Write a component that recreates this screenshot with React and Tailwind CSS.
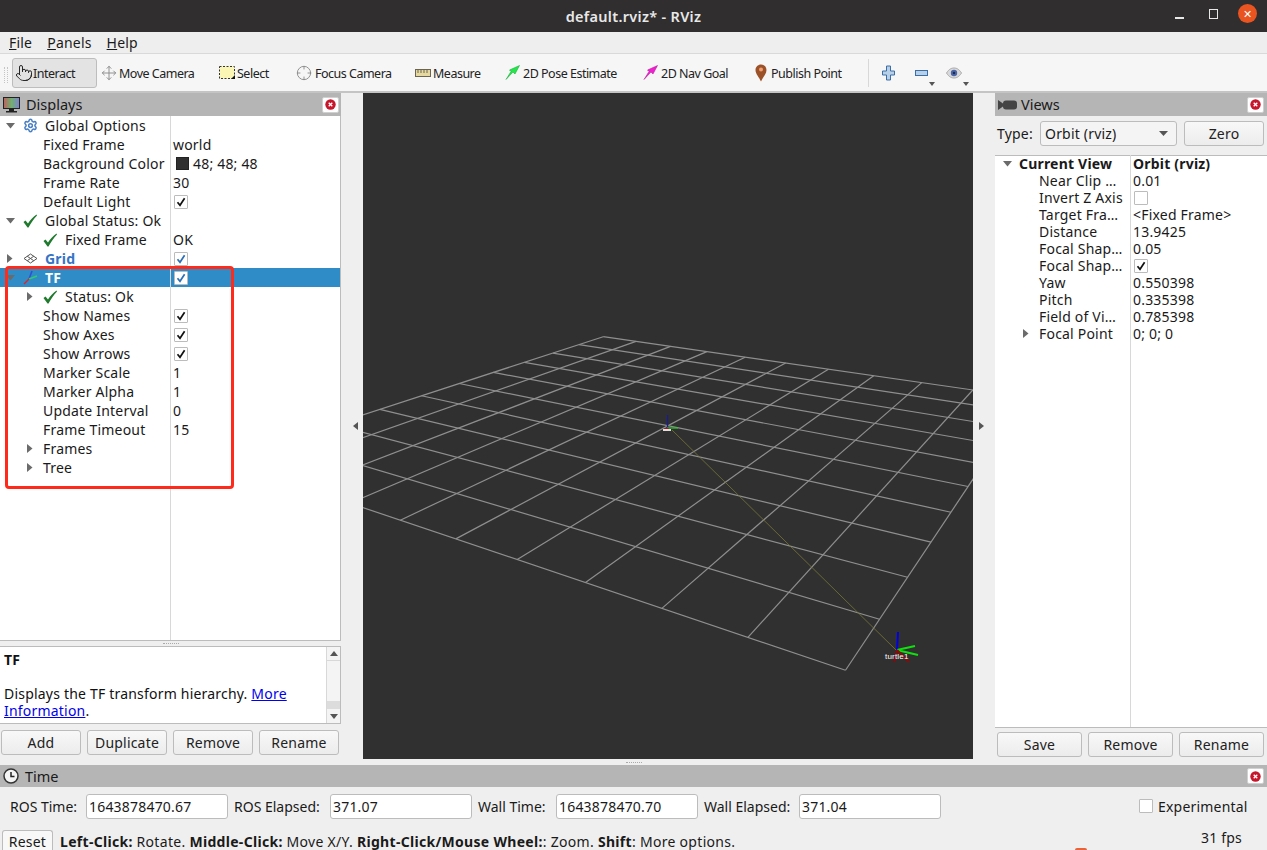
import React from "react";
import { Settings, Move, Crosshair, Pointer } from "lucide-react";

// ground plane homography, grid coords -> screen px
const project = (u, v) => {
  const w = 1 - 0.02451 * u - 0.03905 * v;
  return [(17.23 * u - 46.74 * v + 603.2) / w, (-3.637 * u - 5.61 * v + 336.7) / w];
};
const steps = [0, 1, 2, 3, 4, 5, 6, 7, 8, 9, 10];

function Arrow({ dir }) {
  if (dir === "down") {
    return <svg width="9" height="6" viewBox="0 0 9 6"><path d="M0 0h9L4.500 5.500z" fill="#6b6b6b" /></svg>;
  }
  return <svg width="6" height="9" viewBox="0 0 6 9"><path d="M0 0v9l5.500-4.500z" fill="#6b6b6b" /></svg>;
}

function CloseBtn() {
  return (
    <div className="w-[17px] h-[16px] bg-white rounded-[2px] border border-[#d0d0d0] flex items-center justify-center">
      <svg width="11" height="11" viewBox="0 0 11 11">
        <circle cx="5.500" cy="5.500" r="5.200" fill="#c7162b" />
        <path d="M3.700 3.700l3.600 3.600M7.300 3.700l-3.600 3.600" stroke="#fff" strokeWidth="1.300" />
      </svg>
    </div>
  );
}

function CheckBox({ on, blue }) {
  return (
    <div className="w-[14px] h-[14px] bg-white border border-[#bcbcbc] rounded-[1px] flex items-center justify-center">
      {on && (
        <svg width="10" height="10" viewBox="0 0 10 10">
          <path d="M1.500 5.200L4 8.300 8.600 1.300" fill="none" stroke={blue ? "#2c6fb5" : "#111"} strokeWidth="1.700" />
        </svg>
      )}
    </div>
  );
}

function GreenCheck() {
  return (
    <svg width="14" height="14" viewBox="0 0 14 14">
      <path d="M0.500 8L2.500 6.500 5 9.500C7 6 10 3 13.500 0.500L14 1.500C10.500 5 8 9 5.500 13.500H4.500z" fill="#1f7a2e" />
    </svg>
  );
}

function GridIcon() {
  return (
    <svg width="15" height="11" viewBox="0 0 15 11" fill="none" stroke="#555" strokeWidth="1">
      <path d="M7.500 1L14 5.500 7.500 10 1 5.500zM4.200 3.200l6.500 4.500M10.800 3.200L4.300 7.700" />
    </svg>
  );
}

function AxesIcon() {
  return (
    <svg width="15" height="15" viewBox="0 0 15 15" fill="none" strokeWidth="1.500">
      <path d="M6 9L9 1" stroke="#2f4fd8" />
      <path d="M6 9L14 6" stroke="#2ecb6f" />
      <path d="M6 9L1 14" stroke="#d8262c" />
    </svg>
  );
}

const displayRows = [
  { level: 0, arrow: "down", icon: <Settings size={15} strokeWidth={2.4} color="#4a7fc4" />, label: "Global Options" },
  { level: 1, label: "Fixed Frame", value: "world" },
  { level: 1, label: "Background Color", color: true, value: "48; 48; 48" },
  { level: 1, label: "Frame Rate", value: "30" },
  { level: 1, label: "Default Light", check: true },
  { level: 0, arrow: "down", icon: <GreenCheck />, label: "Global Status: Ok" },
  { level: 1, icon: <GreenCheck />, label: "Fixed Frame", value: "OK" },
  { level: 0, arrow: "right", icon: <GridIcon />, label: "Grid", check: true, blue: true },
  { level: 0, arrow: "down", icon: <AxesIcon />, label: "TF", check: true, selected: true },
  { level: 1, arrow: "right", icon: <GreenCheck />, label: "Status: Ok" },
  { level: 1, label: "Show Names", check: true },
  { level: 1, label: "Show Axes", check: true },
  { level: 1, label: "Show Arrows", check: true },
  { level: 1, label: "Marker Scale", value: "1" },
  { level: 1, label: "Marker Alpha", value: "1" },
  { level: 1, label: "Update Interval", value: "0" },
  { level: 1, label: "Frame Timeout", value: "15" },
  { level: 1, arrow: "right", label: "Frames" },
  { level: 1, arrow: "right", label: "Tree" },
];

function DisplayRow({ row }) {
  return (
    <div className={row.selected ? "flex h-[19px] bg-[#308cc6] text-white" : "flex h-[19px]"}>
      <div className={row.level === 1 ? "w-[170px] pl-[20px] flex items-center shrink-0" : "w-[170px] flex items-center shrink-0"}>
        <div className="w-[20px] flex justify-center">{row.arrow && <Arrow dir={row.arrow} />}</div>
        {row.icon ? (
          <div className="w-[25px] pl-[3px] flex items-center">{row.icon}</div>
        ) : (
          <div className="w-[3px]" />
        )}
        <span className={row.selected ? "font-bold" : row.blue ? "font-bold text-[#3574c4]" : ""}>{row.label}</span>
      </div>
      <div className="flex-1 flex items-center pl-[2px] border-l border-[#d8d8d8]">
        {row.check && <div className="ml-[1px]"><CheckBox on blue={row.blue || row.selected} /></div>}
        {row.color && <div className="w-[13px] h-[13px] bg-[#303030] border border-[#222] ml-[3px] mr-[4px]" />}
        {row.value && <span>{row.value}</span>}
      </div>
    </div>
  );
}

const viewRows = [
  ["Near Clip …", "0.01"],
  ["Invert Z Axis", null, "off"],
  ["Target Fra…", "<Fixed Frame>"],
  ["Distance", "13.9425"],
  ["Focal Shap…", "0.05"],
  ["Focal Shap…", null, "on"],
  ["Yaw", "0.550398"],
  ["Pitch", "0.335398"],
  ["Field of Vi…", "0.785398"],
];

function Btn({ children, className }) {
  return (
    <button className={"h-[25px] bg-gradient-to-b from-[#f8f8f8] to-[#ececec] border border-[#bcbcbc] rounded-[3px] text-[14px] text-[#222] flex items-center justify-center " + className}>
      {children}
    </button>
  );
}

function ToolItem({ icon, label, className }) {
  return (
    <div className={"flex items-center h-[30px] text-[12.500px] tracking-[-0.5px] text-[#222] " + className}>
      {icon}
      <span className="pt-[1px]">{label}</span>
    </div>
  );
}

function TimeInput({ value, className }) {
  return (
    <div className={"h-[25px] bg-white border border-[#bcbcbc] rounded-[3px] pl-[2px] flex items-center " + className}>{value}</div>
  );
}

function Viewport() {
  return (
    <div className="flex-1 bg-[#303030] overflow-hidden">
      <svg width="610" height="666" viewBox="363 93 610 666" className="block">
        {steps.map((i) => {
          const a = project(i, 0);
          const b = project(i, 10);
          const c = project(0, i);
          const d = project(10, i);
          return (
            <g key={i} stroke="#8f8f8f" strokeWidth="1.200" fill="none">
              <line x1={a[0]} y1={a[1]} x2={b[0]} y2={b[1]} />
              <line x1={c[0]} y1={c[1]} x2={d[0]} y2={d[1]} />
            </g>
          );
        })}
        <line x1="672" y1="430" x2="896" y2="650" stroke="#77773a" strokeWidth="0.800" />
        <g fill="none">
          <path d="M667.500 428V415" stroke="#1c1c86" strokeWidth="1.500" />
          <path d="M667 428h11" stroke="#22d022" strokeWidth="1.200" />
          <path d="M667 428l-4 2M667 428l3 2" stroke="#a01818" strokeWidth="1.200" />
          <rect x="663" y="429" width="8" height="2" fill="#e0e0e0" />
        </g>
        <g fill="none">
          <path d="M897 650L898 632" stroke="#0000e0" strokeWidth="2" />
          <path d="M897 650L915 646M897 650L918 655" stroke="#10e010" strokeWidth="2" />
          <path d="M897 650L894 662M897 650L909 662" stroke="#8b0a0a" strokeWidth="2" />
        </g>
        <text x="885" y="659" fontSize="8" fill="#fff" fontFamily="Liberation Sans, sans-serif">turtle1</text>
      </svg>
    </div>
  );
}

export default function App() {
  return (
    <div className="relative w-[1267px] h-[850px] overflow-hidden flex flex-col bg-[#efefef] text-[14px] leading-[17px] tracking-[0.2px] text-[#1a1a1a] [font-family:'Noto_Sans',sans-serif]">
      {/* window title */}
      <div className="h-[32px] bg-[#302e2e] flex items-center shrink-0 relative">
        <div className="w-full text-center text-[#e8e8e8] font-semibold text-[14.500px] tracking-[0.3px]">default.rviz* - RViz</div>
        <div className="absolute right-[10px] top-[4px] flex items-center">
          <div className="w-[9px] h-[2px] bg-[#e8e8e8] mr-[25px] mt-[8px]" />
          <div className="w-[9px] h-[10px] border-[1.500px] border-[#e8e8e8] mr-[20px]" />
          <div className="w-[19px] h-[19px] rounded-full bg-[#e95420] text-white text-[11px] flex items-center justify-center">✕</div>
        </div>
      </div>

      {/* menu */}
      <div className="h-[22px] bg-[#eeeeee] border-b border-[#d9d9d9] flex items-center pl-[9px] gap-[15px] shrink-0">
        <span><span className="underline">F</span>ile</span>
        <span><span className="underline">P</span>anels</span>
        <span><span className="underline">H</span>elp</span>
      </div>

      {/* toolbar */}
      <div className="h-[39px] bg-[#f6f6f6] border-b-2 border-[#c4c4c4] flex items-center pl-[12px] relative shrink-0">
        <div className="absolute left-[4px] top-[13px] w-[4px] h-[16px] border-x border-dotted border-[#c4c4c4]" />
        <ToolItem className="w-[85px] bg-[#e3e3e3] border border-[#bdbdbd] rounded-[3px] pl-[2px]" icon={<Pointer size={18} strokeWidth={1.300} color="#222" />} label="Interact" />
        <ToolItem className="w-[120px] pl-[4px] gap-[2px]" icon={<Move size={16} strokeWidth={1.400} color="#8a8a8a" />} label="Move Camera" />
        <ToolItem className="w-[77px] pl-[2px] gap-[2px]" icon={
          <svg width="16" height="13" viewBox="0 0 16 13">
            <rect x="0.500" y="0.500" width="15" height="12" fill="#fbf6b4" stroke="#333" strokeDasharray="2 1.500" />
            <path d="M16 13h-4l4-4z" fill="#111" />
          </svg>
        } label="Select" />
        <ToolItem className="w-[119px] pl-[2px] gap-[3px]" icon={<Crosshair size={16} strokeWidth={1.400} color="#8a8a8a" />} label="Focus Camera" />
        <ToolItem className="w-[90px] pl-[2px] gap-[2px]" icon={
          <svg width="16" height="8" viewBox="0 0 16 8">
            <rect x="0.500" y="0.500" width="15" height="7" fill="#e6d9a0" stroke="#6b6450" />
            <path d="M3 1v3M6 1v3M9 1v3M12 1v3" stroke="#6b6450" />
          </svg>
        } label="Measure" />
        <ToolItem className="w-[138px] pl-[2px] gap-[3px]" icon={
          <svg width="15" height="15" viewBox="0 0 15 15"><path d="M14.500 0.500L10 9 8 7 1 14.500l5-8-1.500-1.500z" fill="#22e84a" stroke="#12a030" strokeWidth="0.500" /></svg>
        } label="2D Pose Estimate" />
        <ToolItem className="w-[112px] pl-[2px] gap-[3px]" icon={
          <svg width="15" height="15" viewBox="0 0 15 15"><path d="M14.500 0.500L10 9 8 7 1 14.500l5-8-1.500-1.500z" fill="#f020d0" stroke="#b01090" strokeWidth="0.500" /></svg>
        } label="2D Nav Goal" />
        <ToolItem className="w-[115px] pl-[2px] gap-[4px]" icon={
          <svg width="12" height="18" viewBox="0 0 12 18">
            <path d="M6 0.500c3 0 5.500 2.400 5.500 5.500 0 4-3.500 7-5.500 11.500C4 13 0.500 10 0.500 6 0.500 2.900 3 0.500 6 0.500z" fill="#9c5228" />
            <circle cx="6" cy="5.500" r="2" fill="#f0a070" />
          </svg>
        } label="Publish Point" />
        <div className="w-px h-[28px] bg-[#d8d8d8] mr-[13px]" />
        <svg width="13" height="16" viewBox="0 0 13 16" className="mr-[20px]">
          <path d="M4.500 1h4v5h4v4h-4v5h-4v-5h-4V6h4z" fill="#b8cfe8" stroke="#3a6ea8" />
        </svg>
        <div className="relative mr-[18px]">
          <svg width="13" height="6" viewBox="0 0 13 6" className="block">
            <rect x="0.500" y="0.500" width="12" height="5" fill="#b8cfe8" stroke="#3a6ea8" />
          </svg>
          <svg width="6" height="4" viewBox="0 0 6 4" className="absolute left-[14px] top-[12px]"><path d="M0 0h6L3 4z" fill="#555" /></svg>
        </div>
        <div className="relative">
          <svg width="16" height="12" viewBox="0 0 16 12" className="block">
            <path d="M0.500 6C3 2 5.500 1 8 1s5 1 7.500 5C13 10 10.500 11 8 11S3 10 0.500 6z" fill="#d9d9d9" stroke="#aaa" />
            <circle cx="8" cy="6" r="3.200" fill="#4a66a8" />
            <circle cx="8" cy="6" r="1.200" fill="#1e2a4a" />
          </svg>
          <svg width="6" height="4" viewBox="0 0 6 4" className="absolute left-[17px] top-[15px]"><path d="M0 0h6L3 4z" fill="#555" /></svg>
        </div>
      </div>

      {/* docks + 3d view */}
      <div className="h-[666px] flex shrink-0">
        <div className="w-[341px] flex flex-col shrink-0">
          <div className="h-[23px] bg-[#b5b5b5] flex items-center justify-between pl-[3px] pr-[2px] shrink-0">
            <div className="flex items-center gap-[6px]">
              <svg width="17" height="16" viewBox="0 0 17 16">
                <defs>
                  <linearGradient id="scr" x1="0" x2="1" y1="0" y2="0">
                    <stop offset="0" stopColor="#c06060" />
                    <stop offset="0.500" stopColor="#70b070" />
                    <stop offset="1" stopColor="#8080d0" />
                  </linearGradient>
                </defs>
                <rect x="0.500" y="0.500" width="16" height="11" fill="url(#scr)" stroke="#222" />
                <path d="M6 12h5v2h3v1.500H3V14h3z" fill="#222" />
              </svg>
              <span className="text-[14.500px] tracking-normal">Displays</span>
            </div>
            <CloseBtn />
          </div>
          <div className="h-[525px] bg-white border-r border-b border-[#bcbcbc] flex flex-col shrink-0 relative">
            {displayRows.map((row, i) => (
              <DisplayRow key={i} row={row} />
            ))}
            <div className="flex-1 ml-[170px] border-l border-[#d8d8d8]" />
          </div>
          <div className="h-[5px] flex items-center justify-center shrink-0">
            <div className="w-[16px] border-t border-dotted border-[#aaa]" />
          </div>
          <div className="h-[78px] bg-white border-y border-r border-[#bcbcbc] flex shrink-0">
            <div className="flex-1 pl-[4px] pt-[4px] text-[14px] text-[#111]">
              <div className="font-bold">TF</div>
              <div className="h-[17px]" />
              <div>Displays the TF transform hierarchy. <a className="text-[#0000ee] underline">More Information</a>.</div>
            </div>
            <div className="w-[14px] flex flex-col border-l border-[#d8d8d8] bg-[#f4f4f4]">
              <div className="h-[14px] flex items-center justify-center border-b border-[#d8d8d8]"><svg width="8" height="5" viewBox="0 0 8 5"><path d="M0 5h8L4 0z" fill="#555" /></svg></div>
              <div className="flex-1" />
              <div className="h-[8px] bg-[#dcdcdc]" />
              <div className="h-[14px] flex items-center justify-center"><svg width="8" height="5" viewBox="0 0 8 5"><path d="M0 0h8L4 5z" fill="#555" /></svg></div>
            </div>
          </div>
          <div className="flex pl-[1px] gap-[6px] mt-[6px]">
            <Btn className="w-[80px]">Add</Btn>
            <Btn className="w-[80px]">Duplicate</Btn>
            <Btn className="w-[80px]">Remove</Btn>
            <Btn className="w-[80px]">Rename</Btn>
          </div>
        </div>

        <div className="w-[22px] flex items-center justify-center shrink-0">
          <svg width="5" height="8" viewBox="0 0 5 8" className="ml-[6px]"><path d="M5 0v8L0 4z" fill="#555" /></svg>
        </div>

        <Viewport />

        <div className="w-[22px] flex items-center justify-center shrink-0">
          <svg width="5" height="8" viewBox="0 0 5 8" className="-ml-[6px]"><path d="M0 0v8l5-4z" fill="#555" /></svg>
        </div>

        <div className="w-[272px] flex flex-col shrink-0">
          <div className="h-[23px] bg-[#b5b5b5] flex items-center justify-between pl-[3px] pr-[3px] shrink-0">
            <div className="flex items-center gap-[4px]">
              <svg width="19" height="10" viewBox="0 0 19 10">
                <path d="M0 0l5 3.500V6.500L0 10z" fill="#444" />
                <rect x="5" y="0.500" width="14" height="9" rx="3" fill="#444" />
              </svg>
              <span className="text-[14.500px] tracking-normal">Views</span>
            </div>
            <CloseBtn />
          </div>
          <div className="h-[39px] flex items-center pl-[2px] pb-[5px] shrink-0">
            <span className="w-[43px] text-[14px]">Type:</span>
            <div className="w-[137px] h-[25px] bg-[#f4f4f4] border border-[#bcbcbc] rounded-[3px] flex items-center justify-between pl-[4px] pr-[8px]">
              <span>Orbit (rviz)</span>
              <svg width="9" height="5" viewBox="0 0 9 5"><path d="M0 0h9L4.500 5z" fill="#555" /></svg>
            </div>
            <Btn className="w-[80px] ml-[7px]">Zero</Btn>
          </div>
          <div className="h-[573px] bg-white border-y border-[#bcbcbc] shrink-0 relative">
            <div className="flex h-[17px] -mt-[1px]">
              <div className="w-[135px] flex items-center shrink-0 font-bold">
                <div className="w-[24px] flex justify-center pl-[1px]"><Arrow dir="down" /></div>
                Current View
              </div>
              <div className="flex-1 pl-[2px] border-l border-[#d8d8d8] font-bold">Orbit (rviz)</div>
            </div>
            {viewRows.map((r, i) => (
              <div key={i} className="flex h-[17px]">
                <div className="w-[135px] pl-[44px] shrink-0 whitespace-nowrap">{r[0]}</div>
                <div className="flex-1 pl-[2px] border-l border-[#d8d8d8] flex items-center">
                  {r[1]}
                  {r[2] && <div className="ml-[1px]"><CheckBox on={r[2] === "on"} /></div>}
                </div>
              </div>
            ))}
            <div className="flex h-[17px]">
              <div className="w-[135px] flex items-center shrink-0">
                <div className="w-[44px] flex justify-end pr-[10px]"><Arrow dir="right" /></div>
                Focal Point
              </div>
              <div className="flex-1 pl-[2px] border-l border-[#d8d8d8]">0; 0; 0</div>
            </div>
            <div className="absolute top-[169px] bottom-0 left-[135px] border-l border-[#d8d8d8]" />
          </div>
          <div className="flex pl-[2px] gap-[6px] mt-[4px]">
            <Btn className="w-[85px]">Save</Btn>
            <Btn className="w-[85px]">Remove</Btn>
            <Btn className="w-[85px]">Rename</Btn>
          </div>
        </div>
      </div>

      {/* splitter */}
      <div className="h-[6px] flex justify-center items-center shrink-0">
        <div className="w-[16px] border-t border-dotted border-[#aaa]" />
      </div>

      {/* time panel */}
      <div className="flex flex-col flex-1">
        <div className="h-[22px] bg-[#b5b5b5] flex items-center justify-between pl-[3px] pr-[3px] shrink-0">
          <div className="flex items-center gap-[6px]">
            <svg width="16" height="16" viewBox="0 0 16 16">
              <circle cx="8" cy="8" r="7" fill="#f4f4f4" stroke="#333" strokeWidth="1.500" />
              <path d="M8 4v4.500h3.500" fill="none" stroke="#222" strokeWidth="1.500" />
            </svg>
            <span className="text-[14.500px] tracking-normal">Time</span>
          </div>
          <CloseBtn />
        </div>
        <div className="h-[38px] flex items-center pl-[10px] shrink-0">
          <span className="w-[76px] tracking-normal">ROS Time:</span>
          <TimeInput className="w-[142px]" value="1643878470.67" />
          <span className="w-[102px] pl-[6px] tracking-normal">ROS Elapsed:</span>
          <TimeInput className="w-[142px]" value="371.07" />
          <span className="w-[84px] pl-[6px] tracking-normal">Wall Time:</span>
          <TimeInput className="w-[142px]" value="1643878470.70" />
          <span className="w-[101px] pl-[6px] tracking-normal">Wall Elapsed:</span>
          <TimeInput className="w-[142px]" value="371.04" />
          <div className="ml-[198px] mr-[5px]"><CheckBox /></div>
          <span>Experimental</span>
        </div>
        <div className="flex-1 flex items-start pl-[2px]">
          <button className="w-[51px] h-[20px] bg-[#f8f8f8] border-x border-t border-[#bcbcbc] rounded-t-[3px] mt-[5px] text-[14px] leading-[16px] pt-[2px]">Reset</button>
          <div className="pl-[7px] mt-[9px] leading-[16px] tracking-[0.3px] whitespace-nowrap">
            <b>Left-Click:</b> Rotate. <b>Middle-Click:</b> Move X/Y. <b>Right-Click/Mouse Wheel:</b>: Zoom. <b>Shift</b>: More options.
          </div>
          <div className="absolute right-[25px] bottom-[4px]">31 fps</div>
        </div>
      </div>

      {/* red annotation from the screenshot */}
      <div className="absolute left-[5px] top-[266px] w-[229px] h-[223px] border-[3px] border-[#ff2a1a] rounded-[4px] pointer-events-none" />
      <div className="absolute left-[1075px] top-[848px] w-[12px] h-[2px] bg-[#e8623a] rounded-t-full" />
    </div>
  );
}
